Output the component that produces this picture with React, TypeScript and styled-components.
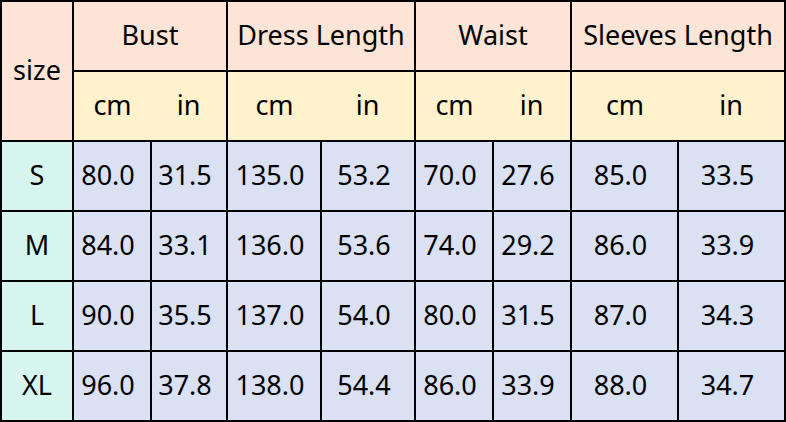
import React from "react";
import styled, { createGlobalStyle } from "styled-components";

const Global = createGlobalStyle`
  html, body { margin: 0; padding: 0; background: #ffffff; }
  body { font-family: "Noto Sans", "Open Sans", sans-serif; }
`;

const Table = styled.div`
  display: grid;
  grid-template-columns: 70px 76px 74px 92px 92px 76px 76px 105px 105px;
  grid-template-rows: repeat(6, 68px);
  gap: 2px;
  padding: 2px;
  width: 786px;
  box-sizing: border-box;
  background: #000;
  font-family: "Noto Sans", "Open Sans", sans-serif;
  color: #000;
`;

const Cell = styled.div<{ $bg: string }>`
  background: ${(p) => p.$bg};
  display: flex;
  align-items: center;
  justify-content: center;
  font-size: 27px;
  line-height: 1;
  padding-bottom: 3px;
  box-sizing: border-box;
  white-space: nowrap;
`;

const DataCell = styled(Cell)`
  padding-right: 8px;
`;

const SizeHead = styled(Cell)`
  grid-row: 1 / span 2;
`;

const GroupHead = styled(Cell)`
  grid-column: span 2;
`;

const UnitGroup = styled.div<{ $cols: string }>`
  grid-column: span 2;
  background: #fff2cc;
  display: grid;
  grid-template-columns: ${(p) => p.$cols};
  align-items: center;
  font-size: 27px;
  line-height: 1;
  padding-bottom: 3px;
  box-sizing: border-box;
  text-align: center;
`;

const groups = [
  { name: "Bust", cols: "77px 75px" },
  { name: "Dress Length", cols: "93px 93px" },
  { name: "Waist", cols: "77px 77px" },
  { name: "Sleeves Length", cols: "106px 106px" },
];

const rows: [string, string[]][] = [
  ["S", ["80.0", "31.5", "135.0", "53.2", "70.0", "27.6", "85.0", "33.5"]],
  ["M", ["84.0", "33.1", "136.0", "53.6", "74.0", "29.2", "86.0", "33.9"]],
  ["L", ["90.0", "35.5", "137.0", "54.0", "80.0", "31.5", "87.0", "34.3"]],
  ["XL", ["96.0", "37.8", "138.0", "54.4", "86.0", "33.9", "88.0", "34.7"]],
];

export default function App() {
  return (
    <>
      <Global />
      <Table>
        <SizeHead $bg="#fce4d6">size</SizeHead>
        {groups.map((g) => (
          <GroupHead key={g.name} $bg="#fce4d6">
            {g.name}
          </GroupHead>
        ))}
        {groups.map((g) => (
          <UnitGroup key={g.name + "u"} $cols={g.cols}>
            <span>cm</span>
            <span>in</span>
          </UnitGroup>
        ))}
        {rows.map(([size, vals]) => (
          <React.Fragment key={size}>
            <Cell $bg="#d6f5ef">{size}</Cell>
            {vals.map((v, i) => (
              <DataCell key={i} $bg="#d9e1f2">
                {v}
              </DataCell>
            ))}
          </React.Fragment>
        ))}
      </Table>
    </>
  );
}
